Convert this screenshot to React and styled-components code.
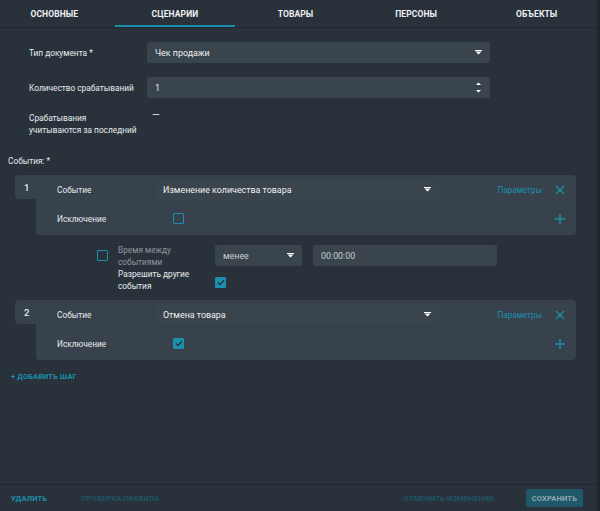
import React from 'react';
import styled, { createGlobalStyle } from 'styled-components';

const teal = '#1a90ad';

const GlobalStyle = createGlobalStyle`
  html, body {
    margin: 0;
    padding: 0;
    background: #29323b;
  }
  body {
    font-family: Roboto, 'Liberation Sans', sans-serif;
    color: #e4e7e9;
  }
`;

const Page = styled.div`
  display: flex;
  width: 600px;
  height: 511px;
  background: #29323b;
  overflow: hidden;
`;

const Main = styled.div`
  flex: 1;
  display: flex;
  flex-direction: column;
  min-width: 0;
`;

const ScrollTrack = styled.div`
  width: 3px;
  background: #1f262d;
`;

const TabBar = styled.div`
  display: flex;
  height: 27px;
  border-bottom: 1px solid #20272e;
  margin-left: -6px;
`;

const Tab = styled.div`
  width: 121px;
  display: flex;
  align-items: center;
  justify-content: center;
  font-size: 8.5px;
  font-weight: 700;
  letter-spacing: 0.1px;
  color: #eef0f2;
  box-sizing: border-box;
  border-bottom: 2px solid ${({ active }) => (active ? teal : 'transparent')};
  padding-top: 2px;
`;

const Content = styled.div`
  flex: 1;
  padding: 14px 0 0 0;
`;

const FormGrid = styled.div`
  display: grid;
  grid-template-columns: 118px 343px;
  row-gap: 14px;
  padding-left: 29px;
  align-items: center;
`;

const Label = styled.div`
  font-size: 8.3px;
  line-height: 12px;
  color: ${({ dim }) => (dim ? '#8e979e' : '#e8ebed')};
`;

const Field = styled.div`
  display: flex;
  align-items: center;
  height: 21px;
  width: ${({ w }) => (w ? `${w}px` : 'auto')};
  padding: 0 8px;
  box-sizing: border-box;
  background: #3a444c;
  border-radius: 2px;
  font-size: 8.9px;
  color: ${({ muted }) => (muted ? '#c9ced2' : '#eef0f2')};
`;

const FieldText = styled.span`
  flex: 1;
`;

const Dash = styled.div`
  font-size: 10px;
  padding-left: 5px;
  align-self: start;
  margin-top: -3px;
`;

const SectionTitle = styled.div`
  font-size: 8.3px;
  padding: 20px 0 0 8px;
  height: 14px;
`;

const StepCard = styled.div`
  display: flex;
  margin: ${({ mt }) => mt}px 0 0 15px;
  width: 561px;
`;

const StepNum = styled.div`
  width: 21px;
  height: 24px;
  box-sizing: border-box;
  padding: 7px 0 0 9px;
  background: #37424c;
  border-radius: 4px 0 0 4px;
  font-size: 9.5px;
  font-weight: 500;
`;

const StepBody = styled.div`
  flex: 1;
  background: #37424c;
  border-radius: 0 4px 4px 4px;
  padding: 3px 10px 5px 21px;
`;

const StepRow = styled.div`
  display: flex;
  align-items: center;
  height: 23px;
  margin-top: ${({ gap }) => (gap ? `${gap}px` : '0')};
`;

const StepLabel = styled(Label)`
  width: 98px;
`;

const ParamLink = styled.span`
  margin-left: auto;
  color: ${teal};
  font-size: 8.2px;
  margin-right: 13px;
`;

const IconSlot = styled.span`
  display: flex;
  margin-left: ${({ auto }) => (auto ? 'auto' : '0')};
  margin-right: 1px;
`;

const Box = styled.span`
  display: inline-flex;
  align-items: center;
  justify-content: center;
  width: 11px;
  height: 11px;
  box-sizing: border-box;
  border: 1.5px solid ${teal};
  border-radius: 1px;
  background: ${({ checked }) => (checked ? teal : 'transparent')};
  margin-left: ${({ ml }) => (ml ? `${ml}px` : '0')};
`;

const Extra = styled.div`
  display: grid;
  grid-template-columns: 21px 97px 87px 195px;
  grid-template-rows: 21px 24px;
  margin: 10px 0 0 97px;
  align-items: center;
  row-gap: 2px;
`;

const Gap = styled.div`
  padding-left: 11px;
`;

const AddStep = styled.div`
  color: ${teal};
  font-size: 7.4px;
  font-weight: 700;
  padding: 12px 0 0 11px;
  letter-spacing: 0.2px;
`;

const Footer = styled.div`
  height: 27px;
  border-top: 1px solid #20272e;
  display: flex;
  align-items: center;
  padding: 0 14px 0 11px;
  box-sizing: border-box;
`;

const FooterBtn = styled.span`
  font-size: 7.6px;
  font-weight: 700;
  letter-spacing: 0.1px;
  color: ${({ dim }) => (dim ? '#1e5466' : teal)};
  margin-left: ${({ ml }) => ml};
`;

const SaveBtn = styled.span`
  margin-left: 32px;
  background: #1e5869;
  color: #8ea7ae;
  font-size: 7.6px;
  font-weight: 700;
  letter-spacing: 0.1px;
  height: 18px;
  padding: 0 6px;
  display: flex;
  align-items: center;
  border-radius: 2px;
`;

const Caret = () => (
  <svg width="7" height="5" viewBox="0 0 7 5">
    <rect x="0" y="0" width="7" height="1" fill="#fff" />
    <path d="M0.5 1.5 H6.5 L3.5 4.5 Z" fill="#fff" />
  </svg>
);

const Spinner = () => (
  <svg width="7" height="11" viewBox="0 0 7 11">
    <path d="M1 3 L3.5 0.5 L6 3 Z" fill="#fff" />
    <path d="M1 8 H6 L3.5 10.5 Z" fill="#fff" />
  </svg>
);

const Check = () => (
  <svg width="8" height="7" viewBox="0 0 8 7">
    <path d="M1 3.5 L3 5.5 L7 1.2" stroke="#24303a" strokeWidth="1.3" fill="none" />
  </svg>
);

const Close = () => (
  <svg width="10" height="10" viewBox="0 0 10 10">
    <path d="M1 1 L9 9 M9 1 L1 9" stroke={teal} strokeWidth="1.4" />
  </svg>
);

const Plus = () => (
  <svg width="10" height="10" viewBox="0 0 10 10">
    <path d="M5 0 V10 M0 5 H10" stroke={teal} strokeWidth="1.4" />
  </svg>
);

function Step({ num, event, checked, mt }) {
  return (
    <StepCard mt={mt}>
      <StepNum>{num}</StepNum>
      <StepBody>
        <StepRow>
          <StepLabel>Событие</StepLabel>
          <Field w={284}>
            <FieldText>{event}</FieldText>
            <Caret />
          </Field>
          <ParamLink>Параметры</ParamLink>
          <IconSlot>
            <Close />
          </IconSlot>
        </StepRow>
        <StepRow gap={6}>
          <StepLabel>Исключение</StepLabel>
          <Box checked={checked} ml={18}>
            {checked && <Check />}
          </Box>
          <IconSlot auto>
            <Plus />
          </IconSlot>
        </StepRow>
      </StepBody>
    </StepCard>
  );
}

export default function App() {
  return (
    <>
      <GlobalStyle />
      <Page>
        <Main>
          <TabBar>
            <Tab>ОСНОВНЫЕ</Tab>
            <Tab active>СЦЕНАРИИ</Tab>
            <Tab>ТОВАРЫ</Tab>
            <Tab>ПЕРСОНЫ</Tab>
            <Tab>ОБЪЕКТЫ</Tab>
          </TabBar>
          <Content>
            <FormGrid>
              <Label>Тип документа *</Label>
              <Field>
                <FieldText>Чек продажи</FieldText>
                <Caret />
              </Field>
              <Label>Количество срабатываний</Label>
              <Field>
                <FieldText>1</FieldText>
                <Spinner />
              </Field>
              <Label>
                Срабатывания
                <br />
                учитываются за последний
              </Label>
              <Dash>—</Dash>
            </FormGrid>
            <SectionTitle>События: *</SectionTitle>
            <Step num="1" event="Изменение количества товара" mt={5} />
            <Extra>
              <Box />
              <Label dim>
                Время между
                <br />
                событиями
              </Label>
              <Field muted>
                <FieldText>менее</FieldText>
                <Caret />
              </Field>
              <Gap>
                <Field muted>
                  <FieldText>00:00:00</FieldText>
                </Field>
              </Gap>
              <span />
              <Label>
                Разрешить другие
                <br />
                события
              </Label>
              <span>
                <Box checked>
                  <Check />
                </Box>
              </span>
              <span />
            </Extra>
            <Step num="2" event="Отмена товара" checked mt={8} />
            <AddStep>+ ДОБАВИТЬ ШАГ</AddStep>
          </Content>
          <Footer>
            <FooterBtn>УДАЛИТЬ</FooterBtn>
            <FooterBtn dim ml="34px">
              ПРОВЕРКА ПРАВИЛА
            </FooterBtn>
            <FooterBtn dim ml="auto">
              ОТМЕНИТЬ ИЗМЕНЕНИЯ
            </FooterBtn>
            <SaveBtn>СОХРАНИТЬ</SaveBtn>
          </Footer>
        </Main>
        <ScrollTrack />
      </Page>
    </>
  );
}
